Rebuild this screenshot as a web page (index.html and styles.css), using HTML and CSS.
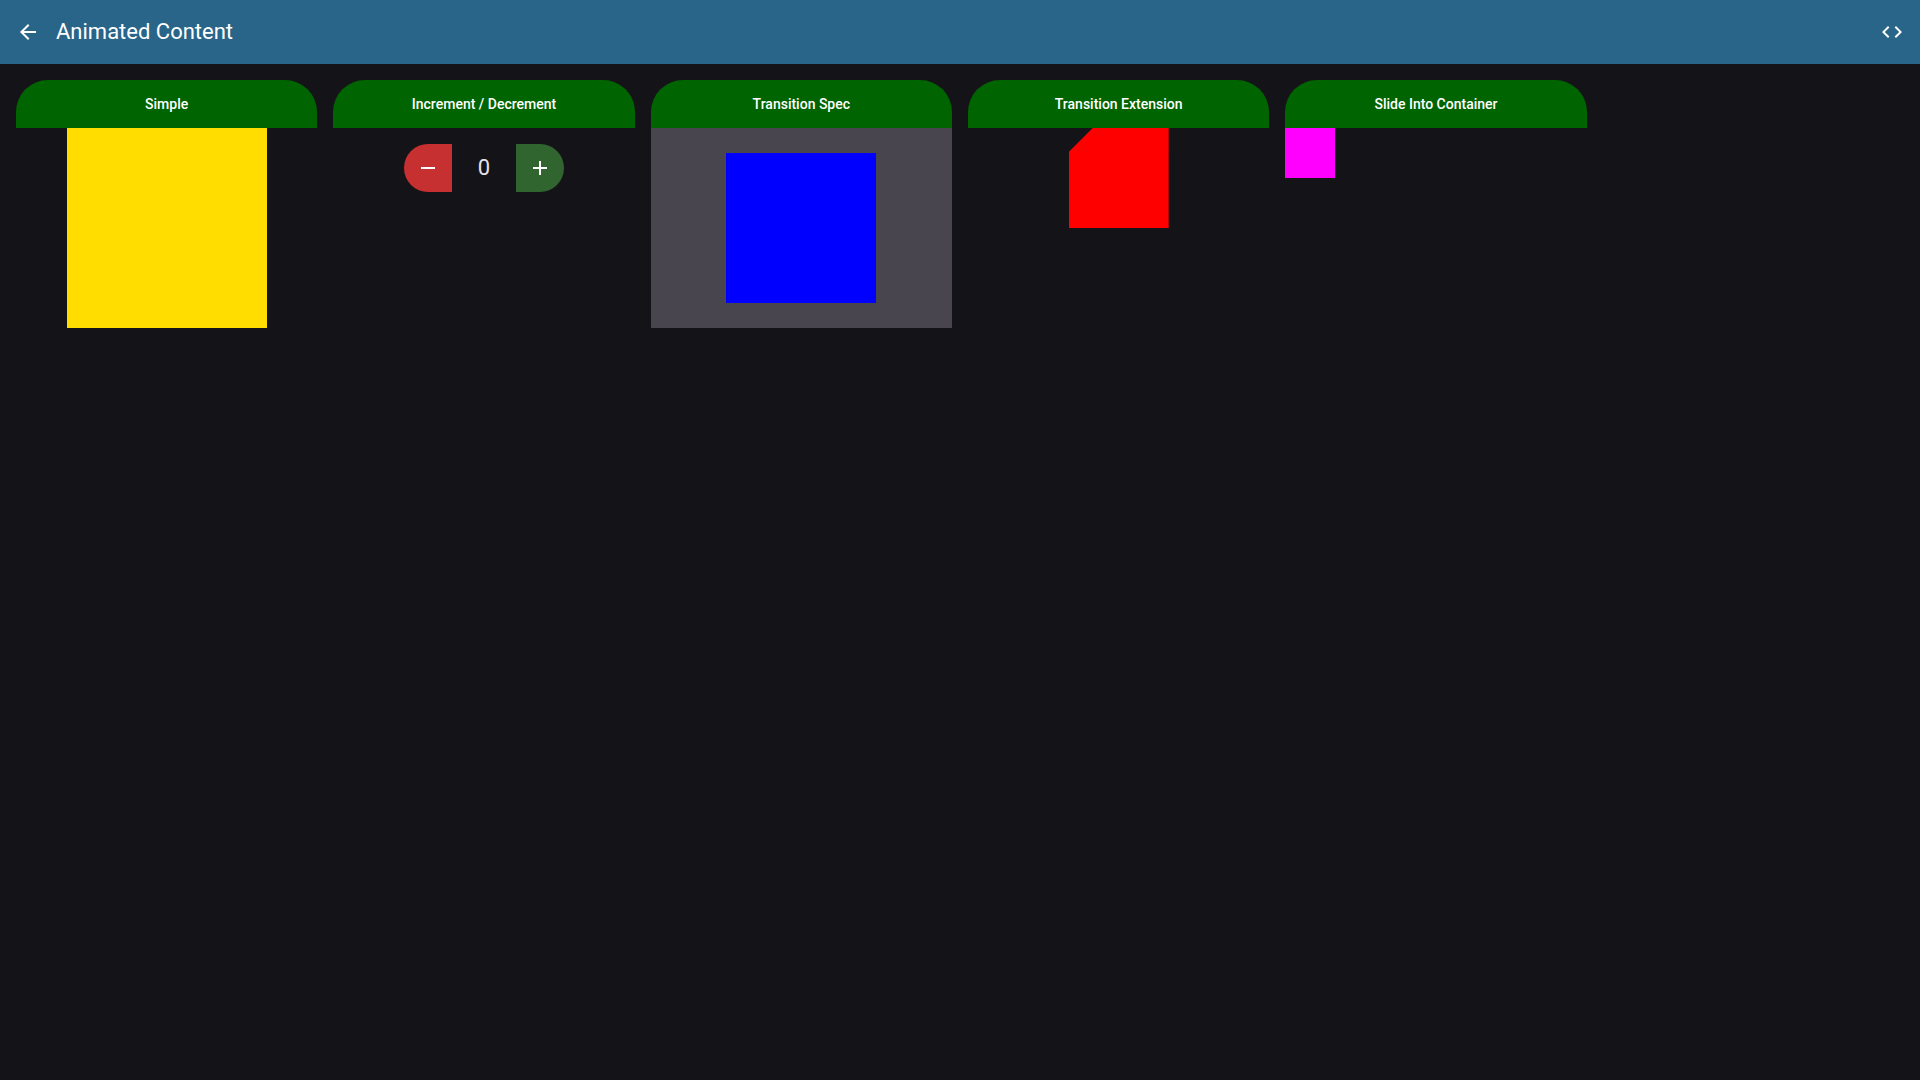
FILE: index.html
```html
<!DOCTYPE html>
<html lang="en">
<head>
  <meta charset="utf-8">
  <meta name="viewport" content="width=device-width, initial-scale=1">
  <title>Animated Content</title>
  <link rel="stylesheet" href="styles.css">
</head>
<body>
  <header class="app-bar">
    <button class="icon-button" type="button" aria-label="Back">
      <svg class="icon" viewBox="0 0 24 24" aria-hidden="true"><path d="M20 11H7.83l5.59-5.59L12 4l-8 8 8 8 1.41-1.41L7.83 13H20v-2z"/></svg>
    </button>
    <h1 class="app-title">Animated Content</h1>
    <button class="icon-button" type="button" aria-label="Show source">
      <svg class="icon" viewBox="0 0 24 24" aria-hidden="true"><path d="M9.4 16.6 4.8 12l4.6-4.6L8 6l-6 6 6 6 1.4-1.4zm5.2 0 4.6-4.6-4.6-4.6L16 6l6 6-6 6-1.4-1.4z"/></svg>
    </button>
  </header>
  <main class="samples">
    <section class="sample">
      <h2 class="sample-title">Simple</h2>
      <div class="box box-simple"></div>
    </section>
    <section class="sample">
      <h2 class="sample-title">Increment / Decrement</h2>
      <div class="counter">
        <button class="step step-down" type="button" aria-label="Decrement">
          <svg class="icon" viewBox="0 0 24 24" aria-hidden="true"><path d="M19 13H5v-2h14v2z"/></svg>
        </button>
        <output class="count">0</output>
        <button class="step step-up" type="button" aria-label="Increment">
          <svg class="icon" viewBox="0 0 24 24" aria-hidden="true"><path d="M19 13h-6v6h-2v-6H5v-2h6V5h2v6h6v2z"/></svg>
        </button>
      </div>
    </section>
    <section class="sample">
      <h2 class="sample-title">Transition Spec</h2>
      <div class="stage">
        <div class="box box-spec"></div>
      </div>
    </section>
    <section class="sample">
      <h2 class="sample-title">Transition Extension</h2>
      <div class="box box-extension"></div>
    </section>
    <section class="sample">
      <h2 class="sample-title">Slide Into Container</h2>
      <div class="box box-slide"></div>
    </section>
  </main>
</body>
</html>
```
FILE: styles.css
```css
* {
  box-sizing: border-box;
}

body {
  margin: 0;
  min-height: 100vh;
  background: #141318;
  color: #e6e1e9;
  font-family: Roboto, "Liberation Sans", sans-serif;
}

.app-bar {
  display: flex;
  align-items: center;
  gap: 16px;
  height: 64px;
  padding: 0 16px;
  background: #296588;
  color: #fff;
}

.app-title {
  flex: 1;
  margin: 0;
  font-size: 22px;
  font-weight: 400;
  line-height: 28px;
}

.icon-button,
.step {
  display: flex;
  align-items: center;
  justify-content: center;
  padding: 0;
  border: 0;
  background: none;
  color: #fff;
  cursor: pointer;
}

.icon {
  display: block;
  width: 24px;
  height: 24px;
  fill: currentColor;
}

.samples {
  display: grid;
  grid-template-columns: repeat(6, 1fr);
  align-items: start;
  gap: 16px;
  padding: 16px;
}

.sample {
  display: flex;
  flex-direction: column;
  align-items: center;
}

.sample-title {
  width: 100%;
  margin: 0;
  padding: 14px 16px;
  border-radius: 32px 32px 0 0;
  background: #006400;
  color: #fff;
  font-size: 14px;
  font-weight: 500;
  line-height: 20px;
  text-align: center;
}

.box-simple {
  width: 200px;
  height: 200px;
  background: #ffdd00;
}

.counter {
  display: flex;
  padding: 16px;
}

.step {
  width: 48px;
  height: 48px;
}

.step-down {
  border-radius: 24px 0 0 24px;
  background: #c73030;
}

.step-up {
  border-radius: 0 24px 24px 0;
  background: #306530;
}

.count {
  width: 64px;
  font-size: 22px;
  line-height: 48px;
  text-align: center;
}

.stage {
  display: flex;
  align-items: center;
  justify-content: center;
  width: 100%;
  height: 200px;
  background: #48454e;
}

.box-spec {
  width: 150px;
  height: 150px;
  background: #00f;
}

.box-extension {
  width: 100px;
  height: 100px;
  background: #f00;
  clip-path: polygon(24px 0, 100% 0, 100% 100%, 0 100%, 0 24px);
}

.box-slide {
  align-self: flex-start;
  width: 50px;
  height: 50px;
  background: #f0f;
}
```
